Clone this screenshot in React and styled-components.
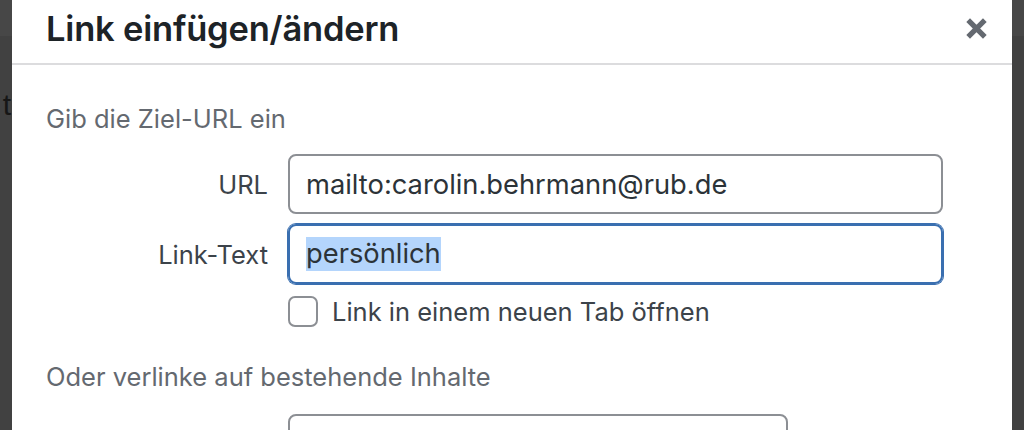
import React from 'react'
import styled, { createGlobalStyle } from 'styled-components'

const GlobalStyle = createGlobalStyle`
    html, body {
        margin: 0;
        padding: 0;
        height: 430px;
        overflow: hidden;
        background: #434343;
    }
    * {
        box-sizing: border-box;
    }
`

const Page = styled.div`
    display: flex;
    height: 430px;
    font-family: Inter, "Noto Sans", sans-serif;
`

const Gutter = styled.div`
    width: 12px;
    flex-shrink: 0;
    overflow: hidden;
    /* admin bar shows through the overlay at the top */
    background: linear-gradient(#474747 0, #474747 36px, #414141 36px);
    position: relative;
`

const GhostLetter = styled.span`
    position: absolute;
    top: 88px;
    right: 1px;
    font-family: "Liberation Sans", sans-serif;
    font-size: 30px;
    color: #161616;
`

const Dialog = styled.div`
    flex: 1;
    background: #fff;
    display: flex;
    flex-direction: column;
    overflow: hidden;
`

const Header = styled.div`
    height: 65px;
    flex-shrink: 0;
    display: flex;
    align-items: center;
    justify-content: space-between;
    padding: 0 23px 6px 34px;
    border-bottom: 2px solid #dcdcde;
`

const Title = styled.h1`
    margin: 0;
    font-size: 34.5px;
    font-weight: 600;
    color: #1d2327;
    letter-spacing: -0.2px;
`

const CloseButton = styled.button`
    border: 0;
    background: none;
    padding: 0;
    width: 26px;
    height: 26px;
    display: flex;
    align-items: center;
    justify-content: center;
    color: #646970;
    cursor: pointer;
`

const Body = styled.div`
    padding: 36px 0 0 34px;
    color: #646970;
    font-size: 25.5px;
`

const SectionTitle = styled.p`
    margin: ${(p) => p.$top || 0}px 0 ${(p) => p.$gap}px;
    line-height: 36px;
`

const Form = styled.div`
    display: grid;
    grid-template-columns: 222px 655px;
    column-gap: 20px;
    row-gap: 10px;
    align-items: center;
`

const Label = styled.label`
    text-align: right;
    color: #3c434a;
`

const Input = styled.div`
    height: 60px;
    width: ${(p) => p.$width || 655}px;
    border: 2px solid ${(p) => (p.$focused ? '#3a6fb0' : '#8c8f94')};
    box-shadow: ${(p) => (p.$focused ? '0 0 0 1px #3a6fb0' : 'none')};
    border-radius: 8px;
    padding: 0 16px;
    display: flex;
    align-items: center;
    font-size: 27.3px;
    color: #2c3338;
`

const Selected = styled.span`
    background: #b4d5fc;
    line-height: 34px;
`

const CheckRow = styled.label`
    grid-column: 2;
    display: flex;
    align-items: center;
    gap: 14px;
    margin-top: 2px;
    color: #3c434a;
`

const Checkbox = styled.span`
    width: 30px;
    height: 31px;
    border: 2px solid #8c8f94;
    border-radius: 7px;
    background: #fff;
`

const SearchRow = styled.div`
    padding-left: 242px;
`

const App = () => {
    return (
        <>
            <GlobalStyle />
            <Page>
                <Gutter>
                    <GhostLetter>t</GhostLetter>
                </Gutter>
                <Dialog>
                    <Header>
                        <Title>Link einfügen/ändern</Title>
                        <CloseButton aria-label="Schließen">
                            <svg width="25" height="25" viewBox="0 0 24 24">
                                <path d="M4 4 L20 20 M20 4 L4 20" stroke="currentColor" strokeWidth="5" />
                            </svg>
                        </CloseButton>
                    </Header>
                    <Body>
                        <SectionTitle $gap={17}>Gib die Ziel-URL ein</SectionTitle>
                        <Form>
                            <Label>URL</Label>
                            <Input>mailto:carolin.behrmann@rub.de</Input>
                            <Label>Link-Text</Label>
                            <Input $focused>
                                <Selected>persönlich</Selected>
                            </Input>
                            <CheckRow>
                                <Checkbox />
                                Link in einem neuen Tab öffnen
                            </CheckRow>
                        </Form>
                        <SectionTitle $top={32} $gap={19}>
                            Oder verlinke auf bestehende Inhalte
                        </SectionTitle>
                        <SearchRow>
                            <Input $width={500} />
                        </SearchRow>
                    </Body>
                </Dialog>
                <Gutter />
            </Page>
        </>
    )
}

export default App
